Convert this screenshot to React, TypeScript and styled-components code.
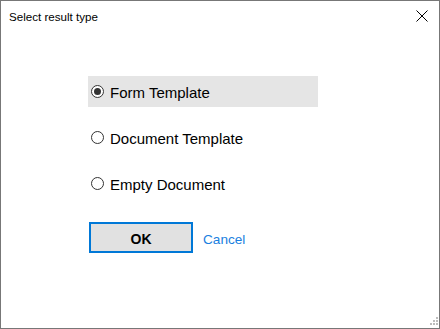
import { useState } from 'react';
import styled, { createGlobalStyle } from 'styled-components';

const GlobalStyle = createGlobalStyle`
  html, body {
    margin: 0;
    padding: 0;
    background: #ffffff;
  }
  body {
    font-family: "Liberation Sans", Arial, sans-serif;
  }
`;

interface IOption {
  id: string;
  label: string;
}

const OPTIONS: IOption[] = [
  { id: 'form', label: 'Form Template' },
  { id: 'document', label: 'Document Template' },
  { id: 'empty', label: 'Empty Document' }
];

const ScWindow = styled.div`
  position: relative;
  box-sizing: border-box;
  width: 440px;
  height: 329px;
  border: 1px solid #777777;
  background: #ffffff;
  display: flex;
  flex-direction: column;
`;

const ScTitleBar = styled.div`
  height: 30px;
  display: flex;
  align-items: center;
  justify-content: space-between;
  padding: 0 8px 0 8px;
`;

const ScTitle = styled.span`
  font-size: 11.6px;
  color: #000000;
  margin-top: 1px;
`;

const ScClose = styled.button`
  width: 16px;
  height: 16px;
  padding: 0;
  border: none;
  background: transparent;
  display: flex;
  align-items: center;
  justify-content: center;
  margin-right: 1px;
`;

const ScBody = styled.div`
  display: flex;
  flex-direction: column;
  padding: 45px 0 0 87px;
`;

const ScOptions = styled.div`
  display: flex;
  flex-direction: column;
  gap: 15px;
`;

const ScRow = styled.label<{ $selected: boolean }>`
  width: 230px;
  height: 31px;
  box-sizing: border-box;
  display: flex;
  align-items: center;
  gap: 6px;
  padding-left: 3px;
  background: ${p => (p.$selected ? '#e5e5e5' : 'transparent')};
  font-size: 15px;
  color: #000000;
  cursor: default;

  span {
    padding-top: 2px;
  }
`;

const ScActions = styled.div`
  display: flex;
  align-items: center;
  gap: 10px;
  margin-top: 23px;
  padding-left: 1px;
`;

const ScOk = styled.button`
  width: 104px;
  height: 31px;
  box-sizing: border-box;
  border: 2px solid #0078d7;
  background: #e1e1e1;
  font-family: "Liberation Sans", Arial, sans-serif;
  font-size: 14px;
  font-weight: bold;
  color: #000000;
  padding: 2px 0 0 0;
`;

const ScCancel = styled.a`
  font-size: 13.6px;
  color: #1a80e0;
  text-decoration: none;
  cursor: pointer;
  padding-top: 3px;
`;

const ScGrip = styled.svg`
  position: absolute;
  right: 1px;
  bottom: 1px;
`;

function Radio({ checked }: { checked: boolean }) {
  return <svg width="13" height="13" viewBox="0 0 13 13">
    <circle cx="6.5" cy="6.5" r="6" fill="#ffffff" stroke="#333333" strokeWidth="1" />
    {checked && <circle cx="6.5" cy="6.5" r="3.5" fill="#333333" />}
  </svg>;
}

export default function App() {
  const [selected, setSelected] = useState('form');

  return <>
    <GlobalStyle />
    <ScWindow>
      <ScTitleBar>
        <ScTitle>Select result type</ScTitle>
        <ScClose aria-label="Close">
          <svg width="12" height="12" viewBox="0 0 12 12">
            <path d="M0.5 0.5 L11.5 11.5 M11.5 0.5 L0.5 11.5" stroke="#000000" strokeWidth="1" />
          </svg>
        </ScClose>
      </ScTitleBar>
      <ScBody>
        <ScOptions>
          {OPTIONS.map(o => <ScRow
            key={o.id}
            $selected={selected === o.id}
            onClick={() => setSelected(o.id)}
          >
            <Radio checked={selected === o.id} />
            <span>{o.label}</span>
          </ScRow>)}
        </ScOptions>
        <ScActions>
          <ScOk>OK</ScOk>
          <ScCancel>Cancel</ScCancel>
        </ScActions>
      </ScBody>
      <ScGrip width="10" height="10" viewBox="0 0 10 10">
        {[[8, 0], [5, 3], [8, 3], [2, 6], [5, 6], [8, 6]].map(([x, y], i) =>
          <rect key={i} x={x} y={y} width="2" height="2" fill="#bcbcbc" />)}
      </ScGrip>
    </ScWindow>
  </>;
}
